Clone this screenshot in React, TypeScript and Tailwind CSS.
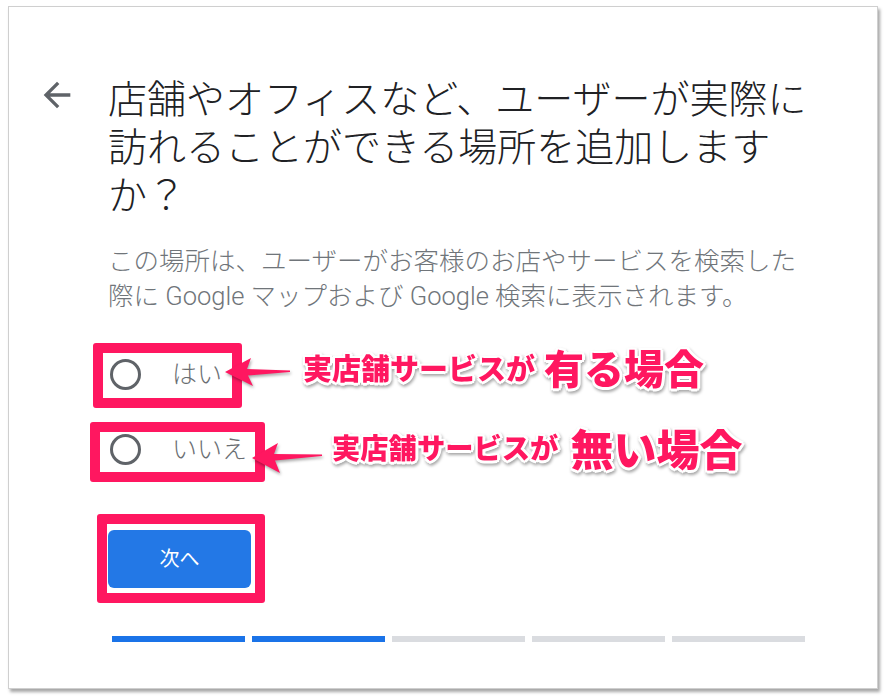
import React from 'react'

const jp = { fontFamily: 'Roboto, "Noto Sans CJK JP", sans-serif' }
const note = { fontFamily: '"Noto Sans CJK JP", sans-serif' }

const outline =
  '[text-shadow:2px_0_0_#fff,-2px_0_0_#fff,0_2px_0_#fff,0_-2px_0_#fff,2px_2px_0_#fff,-2px_-2px_0_#fff,2px_-2px_0_#fff,-2px_2px_0_#fff,3px_0_0_#fff,0_3px_0_#fff]'

function Radio({ label }: { label: string }) {
  return (
    <div className="flex h-[50px] items-center">
      <span className="ml-[2px] h-[31px] w-[31px] rounded-full border-[3px] border-[#5f6368]" />
      <span className="ml-[31px] text-[25px] font-light leading-none text-[#6a6e72]">{label}</span>
    </div>
  )
}

export default function App() {
  const steps = [true, true, false, false, false]
  return (
    <div className="relative h-[699px] w-[886px] overflow-hidden bg-white pl-[8px] pt-[6px]" style={jp}>
      <div className="flex h-[683px] w-[870px] border border-[#cfcfcf] bg-white pl-[28px] pt-[69px] shadow-[2px_3px_3px_rgba(0,0,0,0.35)]">
        <svg viewBox="0 0 24 24" className="mt-[-1px] h-10 w-10 shrink-0 fill-[#5f6368]">
          <path d="M20 11H7.83l5.59-5.59L12 4l-8 8 8 8 1.41-1.41L7.83 13H20v-2z" />
        </svg>

        <div className="ml-[31px] flex flex-col">
          <h1 className="text-[39px] font-light leading-[48px] text-[#202124]">
            店舗やオフィスなど、ユーザーが実際に
            <br />
            訪れることができる場所を追加します
            <br />
            か？
          </h1>
          <p className="mt-[24px] text-[25.5px] font-light leading-[35px] text-[#70757a]">
            この場所は、ユーザーがお客様のお店やサービスを検索した
            <br />
            際に Google マップおよび Google 検索に表示されます。
          </p>

          <div className="mt-[35px]">
            <Radio label="はい" />
          </div>
          <div className="mt-[25px]">
            <Radio label="いいえ" />
          </div>

          <button className="mt-[56px] h-[58px] w-[143px] rounded-md bg-[#2378e6] text-[20px] font-normal text-white">
            次へ
          </button>

          <div className="ml-[4px] mt-[48px] flex gap-[7px]">
            {steps.map((on, i) => (
              <div key={i} className={on ? 'h-[6px] w-[133px] bg-[#1a73e8]' : 'h-[6px] w-[133px] bg-[#dadce0]'} />
            ))}
          </div>
        </div>
      </div>

      {/* annotation boxes */}
      <div className="absolute left-[93px] top-[343px] h-[65px] w-[149px] rounded-[3px] border-[10px] border-[#ff1760]" />
      <div className="absolute left-[90px] top-[422px] h-[60px] w-[175px] rounded-[3px] border-[10px] border-[#ff1760]" />
      <div className="absolute left-[97px] top-[514px] h-[89px] w-[168px] rounded-[3px] border-[10px] border-[#ff1760]" />

      {/* annotation arrows */}
      <svg
        viewBox="0 0 66 31"
        className="absolute left-[225px] top-[356px] h-[31px] w-[66px] drop-shadow-[1px_2px_1.5px_rgba(0,0,0,0.35)]"
      >
        <polygon points="0,16 26,2 22,13 65,14.5 65,16 23,19.5 28,30" fill="#ff1760" />
      </svg>
      <svg
        viewBox="0 0 73 32"
        className="absolute left-[250px] top-[442px] h-[32px] w-[73px] drop-shadow-[1px_2px_1.5px_rgba(0,0,0,0.35)]"
      >
        <polygon points="2,16 28,1 24,12 72,12.5 72,14 25,18.5 30,31" fill="#ff1760" />
      </svg>

      {/* annotation labels */}
      <div
        className={`absolute left-[303px] top-[342px] flex items-center font-black text-[#ff1760] drop-shadow-[1px_2px_1.5px_rgba(0,0,0,0.35)] ${outline}`}
        style={note}
      >
        <span className="text-[29px] leading-[50px]">実店舗サービスが</span>
        <span className="ml-[9px] text-[40px] leading-[50px]">有る場合</span>
      </div>
      <div
        className={`absolute left-[332px] top-[421px] flex items-center font-black text-[#ff1760] drop-shadow-[1px_2px_1.5px_rgba(0,0,0,0.35)] ${outline}`}
        style={note}
      >
        <span className="text-[28.3px] leading-[52px]">実店舗サービスが</span>
        <span className="ml-[12px] text-[43px] leading-[52px]">無い場合</span>
      </div>
    </div>
  )
}
